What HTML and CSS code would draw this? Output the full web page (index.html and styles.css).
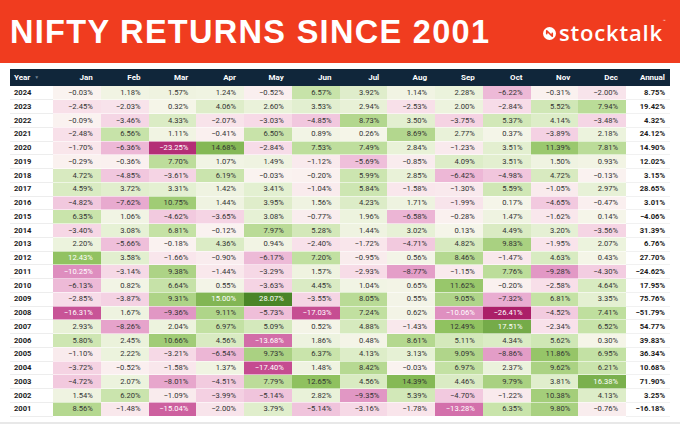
FILE: index.html
```html
<!DOCTYPE html>
<html lang="en">
<head>
<meta charset="utf-8">
<title>Nifty Returns Since 2001</title>
<link rel="stylesheet" href="styles.css">
</head>
<body>
<header class="banner">
  <h1 class="title">NIFTY RETURNS SINCE 2001</h1>
  <div class="logo">
    <svg class="logo-mark" viewBox="-8 -8 16 16" width="13" height="13" aria-hidden="true">
      <circle cx="0" cy="0" r="8" fill="#fff"/>
      <path d="M-3.4 0.2 V-3.4 L3.4 3.4 V-0.2" fill="none" stroke="#f03c1f" stroke-width="2" stroke-linecap="round" stroke-linejoin="round"/>
    </svg>
    <span class="brand">stocktalk</span><span class="tm">™</span>
  </div>
</header>
<main class="wrap">
<table class="grid">
  <colgroup>
    <col class="c-year"><col class="c-m"><col class="c-m"><col class="c-m"><col class="c-m"><col class="c-m"><col class="c-m"><col class="c-m"><col class="c-m"><col class="c-m"><col class="c-m"><col class="c-m"><col class="c-m"><col class="c-ann">
  </colgroup>
  <thead>
    <tr><th class="h-year">Year <span class="sort">▼</span></th><th>Jan</th><th>Feb</th><th>Mar</th><th>Apr</th><th>May</th><th>Jun</th><th>Jul</th><th>Aug</th><th>Sep</th><th>Oct</th><th>Nov</th><th>Dec</th><th class="h-ann">Annual</th></tr>
  </thead>
  <tbody>
    <tr><td class="yr">2024</td><td class="v">−0.03%</td><td class="v">1.18%</td><td class="v">1.57%</td><td class="v">1.24%</td><td class="v">−0.52%</td><td class="v">6.57%</td><td class="v">3.92%</td><td class="v">1.14%</td><td class="v">2.28%</td><td class="v">−6.22%</td><td class="v">−0.31%</td><td class="v">−2.00%</td><td class="ann">8.75%</td></tr>
    <tr><td class="yr">2023</td><td class="v">−2.45%</td><td class="v">−2.03%</td><td class="v">0.32%</td><td class="v">4.06%</td><td class="v">2.60%</td><td class="v">3.53%</td><td class="v">2.94%</td><td class="v">−2.53%</td><td class="v">2.00%</td><td class="v">−2.84%</td><td class="v">5.52%</td><td class="v">7.94%</td><td class="ann">19.42%</td></tr>
    <tr><td class="yr">2022</td><td class="v">−0.09%</td><td class="v">−3.46%</td><td class="v">4.33%</td><td class="v">−2.07%</td><td class="v">−3.03%</td><td class="v">−4.85%</td><td class="v">8.73%</td><td class="v">3.50%</td><td class="v">−3.75%</td><td class="v">5.37%</td><td class="v">4.14%</td><td class="v">−3.48%</td><td class="ann">4.32%</td></tr>
    <tr><td class="yr">2021</td><td class="v">−2.48%</td><td class="v">6.56%</td><td class="v">1.11%</td><td class="v">−0.41%</td><td class="v">6.50%</td><td class="v">0.89%</td><td class="v">0.26%</td><td class="v">8.69%</td><td class="v">2.77%</td><td class="v">0.37%</td><td class="v">−3.89%</td><td class="v">2.18%</td><td class="ann">24.12%</td></tr>
    <tr><td class="yr">2020</td><td class="v">−1.70%</td><td class="v">−6.36%</td><td class="v">−23.25%</td><td class="v">14.68%</td><td class="v">−2.84%</td><td class="v">7.53%</td><td class="v">7.49%</td><td class="v">2.84%</td><td class="v">−1.23%</td><td class="v">3.51%</td><td class="v">11.39%</td><td class="v">7.81%</td><td class="ann">14.90%</td></tr>
    <tr><td class="yr">2019</td><td class="v">−0.29%</td><td class="v">−0.36%</td><td class="v">7.70%</td><td class="v">1.07%</td><td class="v">1.49%</td><td class="v">−1.12%</td><td class="v">−5.69%</td><td class="v">−0.85%</td><td class="v">4.09%</td><td class="v">3.51%</td><td class="v">1.50%</td><td class="v">0.93%</td><td class="ann">12.02%</td></tr>
    <tr><td class="yr">2018</td><td class="v">4.72%</td><td class="v">−4.85%</td><td class="v">−3.61%</td><td class="v">6.19%</td><td class="v">−0.03%</td><td class="v">−0.20%</td><td class="v">5.99%</td><td class="v">2.85%</td><td class="v">−6.42%</td><td class="v">−4.98%</td><td class="v">4.72%</td><td class="v">−0.13%</td><td class="ann">3.15%</td></tr>
    <tr><td class="yr">2017</td><td class="v">4.59%</td><td class="v">3.72%</td><td class="v">3.31%</td><td class="v">1.42%</td><td class="v">3.41%</td><td class="v">−1.04%</td><td class="v">5.84%</td><td class="v">−1.58%</td><td class="v">−1.30%</td><td class="v">5.59%</td><td class="v">−1.05%</td><td class="v">2.97%</td><td class="ann">28.65%</td></tr>
    <tr><td class="yr">2016</td><td class="v">−4.82%</td><td class="v">−7.62%</td><td class="v">10.75%</td><td class="v">1.44%</td><td class="v">3.95%</td><td class="v">1.56%</td><td class="v">4.23%</td><td class="v">1.71%</td><td class="v">−1.99%</td><td class="v">0.17%</td><td class="v">−4.65%</td><td class="v">−0.47%</td><td class="ann">3.01%</td></tr>
    <tr><td class="yr">2015</td><td class="v">6.35%</td><td class="v">1.06%</td><td class="v">−4.62%</td><td class="v">−3.65%</td><td class="v">3.08%</td><td class="v">−0.77%</td><td class="v">1.96%</td><td class="v">−6.58%</td><td class="v">−0.28%</td><td class="v">1.47%</td><td class="v">−1.62%</td><td class="v">0.14%</td><td class="ann">−4.06%</td></tr>
    <tr><td class="yr">2014</td><td class="v">−3.40%</td><td class="v">3.08%</td><td class="v">6.81%</td><td class="v">−0.12%</td><td class="v">7.97%</td><td class="v">5.28%</td><td class="v">1.44%</td><td class="v">3.02%</td><td class="v">0.13%</td><td class="v">4.49%</td><td class="v">3.20%</td><td class="v">−3.56%</td><td class="ann">31.39%</td></tr>
    <tr><td class="yr">2013</td><td class="v">2.20%</td><td class="v">−5.66%</td><td class="v">−0.18%</td><td class="v">4.36%</td><td class="v">0.94%</td><td class="v">−2.40%</td><td class="v">−1.72%</td><td class="v">−4.71%</td><td class="v">4.82%</td><td class="v">9.83%</td><td class="v">−1.95%</td><td class="v">2.07%</td><td class="ann">6.76%</td></tr>
    <tr><td class="yr">2012</td><td class="v">12.43%</td><td class="v">3.58%</td><td class="v">−1.66%</td><td class="v">−0.90%</td><td class="v">−6.17%</td><td class="v">7.20%</td><td class="v">−0.95%</td><td class="v">0.56%</td><td class="v">8.46%</td><td class="v">−1.47%</td><td class="v">4.63%</td><td class="v">0.43%</td><td class="ann">27.70%</td></tr>
    <tr><td class="yr">2011</td><td class="v">−10.25%</td><td class="v">−3.14%</td><td class="v">9.38%</td><td class="v">−1.44%</td><td class="v">−3.29%</td><td class="v">1.57%</td><td class="v">−2.93%</td><td class="v">−8.77%</td><td class="v">−1.15%</td><td class="v">7.76%</td><td class="v">−9.28%</td><td class="v">−4.30%</td><td class="ann">−24.62%</td></tr>
    <tr><td class="yr">2010</td><td class="v">−6.13%</td><td class="v">0.82%</td><td class="v">6.64%</td><td class="v">0.55%</td><td class="v">−3.63%</td><td class="v">4.45%</td><td class="v">1.04%</td><td class="v">0.65%</td><td class="v">11.62%</td><td class="v">−0.20%</td><td class="v">−2.58%</td><td class="v">4.64%</td><td class="ann">17.95%</td></tr>
    <tr><td class="yr">2009</td><td class="v">−2.85%</td><td class="v">−3.87%</td><td class="v">9.31%</td><td class="v">15.00%</td><td class="v">28.07%</td><td class="v">−3.55%</td><td class="v">8.05%</td><td class="v">0.55%</td><td class="v">9.05%</td><td class="v">−7.32%</td><td class="v">6.81%</td><td class="v">3.35%</td><td class="ann">75.76%</td></tr>
    <tr><td class="yr">2008</td><td class="v">−16.31%</td><td class="v">1.67%</td><td class="v">−9.36%</td><td class="v">9.11%</td><td class="v">−5.73%</td><td class="v">−17.03%</td><td class="v">7.24%</td><td class="v">0.62%</td><td class="v">−10.06%</td><td class="v">−26.41%</td><td class="v">−4.52%</td><td class="v">7.41%</td><td class="ann">−51.79%</td></tr>
    <tr><td class="yr">2007</td><td class="v">2.93%</td><td class="v">−8.26%</td><td class="v">2.04%</td><td class="v">6.97%</td><td class="v">5.09%</td><td class="v">0.52%</td><td class="v">4.88%</td><td class="v">−1.43%</td><td class="v">12.49%</td><td class="v">17.51%</td><td class="v">−2.34%</td><td class="v">6.52%</td><td class="ann">54.77%</td></tr>
    <tr><td class="yr">2006</td><td class="v">5.80%</td><td class="v">2.45%</td><td class="v">10.66%</td><td class="v">4.56%</td><td class="v">−13.68%</td><td class="v">1.86%</td><td class="v">0.48%</td><td class="v">8.61%</td><td class="v">5.11%</td><td class="v">4.34%</td><td class="v">5.62%</td><td class="v">0.30%</td><td class="ann">39.83%</td></tr>
    <tr><td class="yr">2005</td><td class="v">−1.10%</td><td class="v">2.22%</td><td class="v">−3.21%</td><td class="v">−6.54%</td><td class="v">9.73%</td><td class="v">6.37%</td><td class="v">4.13%</td><td class="v">3.13%</td><td class="v">9.09%</td><td class="v">−8.86%</td><td class="v">11.86%</td><td class="v">6.95%</td><td class="ann">36.34%</td></tr>
    <tr><td class="yr">2004</td><td class="v">−3.72%</td><td class="v">−0.52%</td><td class="v">−1.58%</td><td class="v">1.37%</td><td class="v">−17.40%</td><td class="v">1.48%</td><td class="v">8.42%</td><td class="v">−0.03%</td><td class="v">6.97%</td><td class="v">2.37%</td><td class="v">9.62%</td><td class="v">6.21%</td><td class="ann">10.68%</td></tr>
    <tr><td class="yr">2003</td><td class="v">−4.72%</td><td class="v">2.07%</td><td class="v">−8.01%</td><td class="v">−4.51%</td><td class="v">7.79%</td><td class="v">12.65%</td><td class="v">4.56%</td><td class="v">14.39%</td><td class="v">4.46%</td><td class="v">9.79%</td><td class="v">3.81%</td><td class="v">16.38%</td><td class="ann">71.90%</td></tr>
    <tr><td class="yr">2002</td><td class="v">1.54%</td><td class="v">6.20%</td><td class="v">−1.09%</td><td class="v">−3.99%</td><td class="v">−5.14%</td><td class="v">2.82%</td><td class="v">−9.35%</td><td class="v">5.39%</td><td class="v">−4.70%</td><td class="v">−1.22%</td><td class="v">10.38%</td><td class="v">4.13%</td><td class="ann">3.25%</td></tr>
    <tr><td class="yr">2001</td><td class="v">8.56%</td><td class="v">−1.48%</td><td class="v">−15.04%</td><td class="v">−2.00%</td><td class="v">3.79%</td><td class="v">−5.14%</td><td class="v">−3.16%</td><td class="v">−1.78%</td><td class="v">−13.28%</td><td class="v">6.35%</td><td class="v">9.80%</td><td class="v">−0.76%</td><td class="ann">−16.18%</td></tr>
  </tbody>
</table>
</main>
<div class="scrollbar"></div>
<script src="script.js"></script>
</body>
</html>
```

FILE: styles.css
```css
* { box-sizing: border-box; }
html, body { margin: 0; padding: 0; }
body {
  width: 680px;
  height: 424px;
  overflow: hidden;
  background: #ffffff;
  font-family: Roboto, "Liberation Sans", Arial, sans-serif;
}
.banner {
  height: 63px;
  background: #f03c1f;
  display: flex;
  align-items: center;
  justify-content: space-between;
  padding: 0 14px 0 10px;
}
.title {
  margin: 0;
  padding-top: 2px;
  color: #ffffff;
  font-family: "Liberation Sans", Arial, sans-serif;
  font-weight: 700;
  font-size: 32.5px;
  letter-spacing: 1.3px;
  line-height: 1;
  white-space: nowrap;
  flex: 0 0 auto;
}
.logo {
  display: flex;
  align-items: center;
  padding-top: 4px;
  color: #ffffff;
  flex: 0 0 auto;
}
.logo-mark { display: block; margin-right: 3px; flex: 0 0 auto; }
.brand {
  font-family: "Open Sans", sans-serif;
  font-weight: 600;
  font-size: 22px;
  letter-spacing: 0.8px;
  line-height: 1;
  padding-bottom: 3px;
}
.tm {
  align-self: flex-start;
  font-size: 5px;
  margin-left: 0;
  margin-top: -3px;
  opacity: 0.85;
}
.wrap { padding: 6px 10px 0 10px; }
.grid {
  width: 660px;
  border-collapse: collapse;
  table-layout: fixed;
}
.c-year { width: 43px; }
.c-m { width: 47.75px; }
.c-ann { width: 44px; }
.grid thead th {
  background: #10263a;
  color: #ffffff;
  font-weight: 700;
  font-size: 8px;
  height: 17px;
  padding: 0 8px 0 0;
  text-align: right;
  white-space: nowrap;
}
.grid thead th.h-year { text-align: left; padding-left: 4px; }
.grid thead th.h-ann { padding-right: 5px; }
.sort { color: #6f7f8e; font-size: 5px; margin-left: 2px; vertical-align: 1px; }
.grid tbody td {
  height: 13.75px;
  padding: 0 8px 0 0;
  font-size: 7.6px;
  line-height: 1;
  text-align: right;
  color: #333333;
  white-space: nowrap;
  border-bottom: 1px solid rgba(255, 255, 255, 0.55);
}
.grid tbody td.yr {
  text-align: left;
  padding-left: 4px;
  font-weight: 700;
  color: #1b1b1b;
  border-bottom-color: #ededed;
}
.grid tbody td.ann {
  padding-right: 5px;
  font-weight: 700;
  color: #1b1b1b;
  border-bottom-color: #f1f1f1;
}
.grid tbody td.light { color: #ffffff; }
.scrollbar {
  margin-top: 5px;
  height: 3px;
  background: #e8e8e8;
}
```

FILE: script.js
```js
(function () {
  var neg = [
    [0, [250, 243, 240]],
    [2.6, [248, 223, 233]],
    [6.6, [236, 181, 213]],
    [10.5, [221, 139, 189]],
    [17, [198, 77, 146]],
    [26.41, [171, 31, 104]]
  ];
  var pos = [
    [0, [246, 245, 234]],
    [2.8, [233, 242, 217]],
    [7, [195, 225, 163]],
    [12.6, [143, 193, 95]],
    [16.8, [120, 174, 75]],
    [28.07, [74, 133, 40]]
  ];
  function interp(stops, a) {
    for (var i = 1; i < stops.length; i++) {
      if (a <= stops[i][0] || i === stops.length - 1) {
        var s0 = stops[i - 1], s1 = stops[i];
        var t = Math.min(1, Math.max(0, (a - s0[0]) / (s1[0] - s0[0])));
        return s0[1].map(function (c, k) { return Math.round(c + (s1[1][k] - c) * t); });
      }
    }
    return stops[0][1];
  }
  var cells = document.querySelectorAll('td.v');
  for (var i = 0; i < cells.length; i++) {
    var td = cells[i];
    var v = parseFloat(td.textContent.replace('\u2212', '-').replace('%', ''));
    var c = v < 0 ? interp(neg, -v) : interp(pos, v);
    td.style.backgroundColor = 'rgb(' + c.join(',') + ')';
    if (v <= -10 || v >= 15 || v === 12.43) td.classList.add('light');
  }
})();
```
